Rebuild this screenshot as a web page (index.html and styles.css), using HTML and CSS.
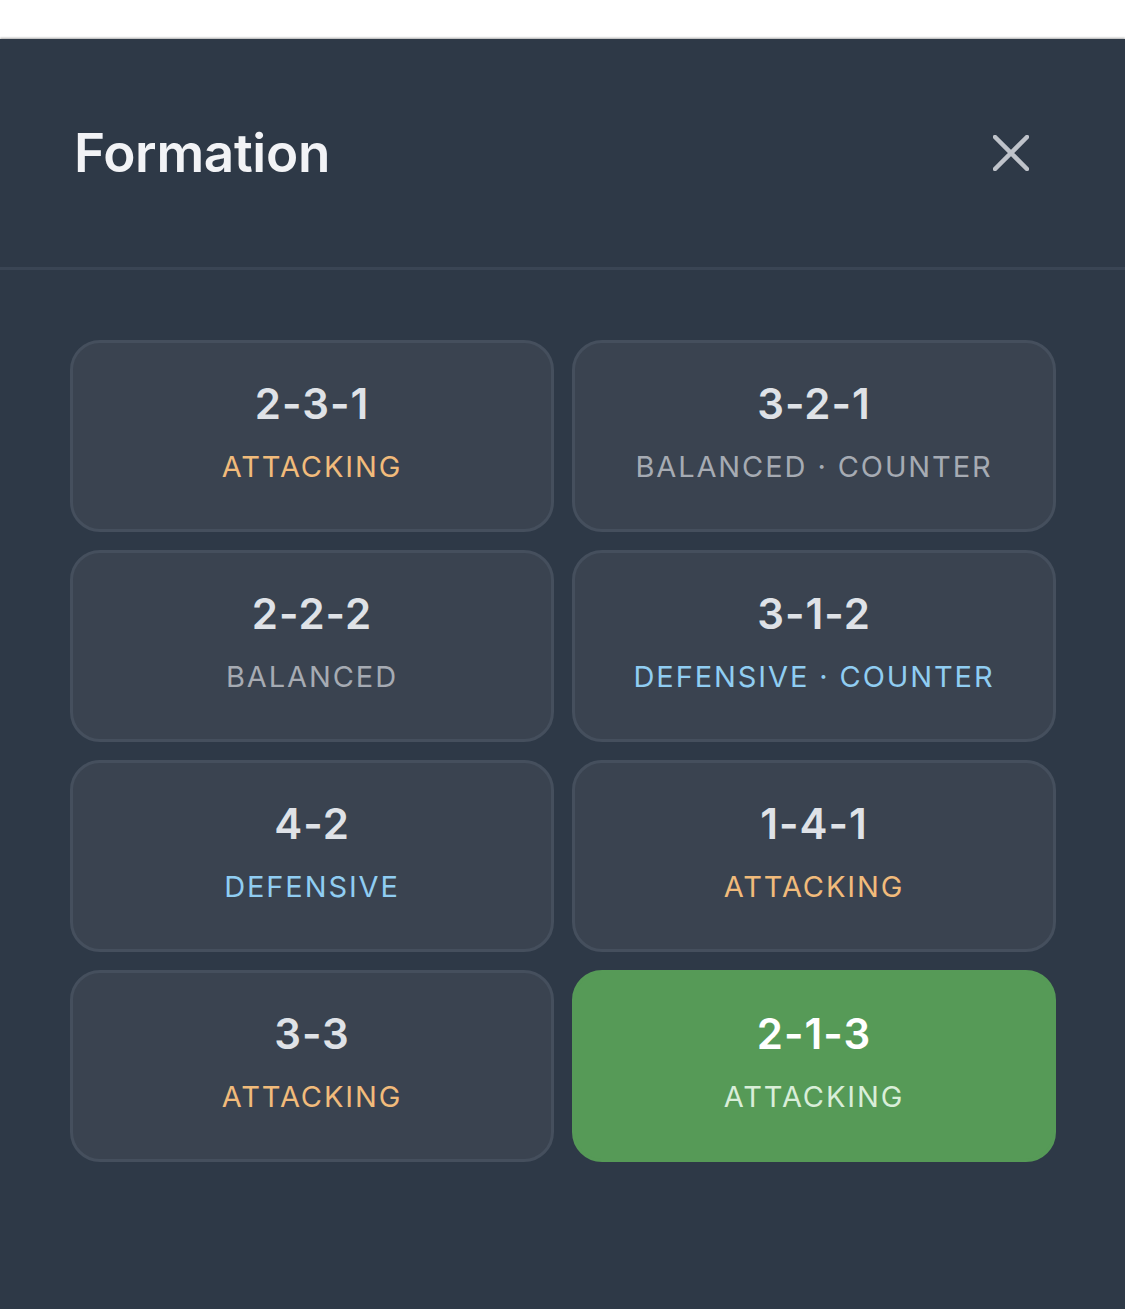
FILE: index.html
```html
<!DOCTYPE html>
<html lang="en">
<head>
  <meta charset="UTF-8" />
  <meta name="viewport" content="width=device-width, initial-scale=1.0"/>
  <title>Formation</title>
  <link rel="stylesheet" href="styles.css">
</head>
<body>

  <div class="sheet">
    <!-- CABECERA -->
    <div class="sheet-header">
      <h1>Formation</h1>
      <button class="close" aria-label="Close">
        <svg viewBox="0 0 36 36" width="36" height="36">
          <path d="M2 2 L34 34 M34 2 L2 34" stroke="currentColor" stroke-width="4.5" stroke-linecap="round" fill="none"/>
        </svg>
      </button>
    </div>

    <!-- LISTA DE FORMACIONES -->
    <div class="formaciones">
      <div class="formacion">
        <span class="numero">2-3-1</span>
        <span class="estilo ataque">ATTACKING</span>
      </div>
      <div class="formacion">
        <span class="numero">3-2-1</span>
        <span class="estilo">BALANCED · COUNTER</span>
      </div>
      <div class="formacion">
        <span class="numero">2-2-2</span>
        <span class="estilo">BALANCED</span>
      </div>
      <div class="formacion">
        <span class="numero">3-1-2</span>
        <span class="estilo defensa">DEFENSIVE · COUNTER</span>
      </div>
      <div class="formacion">
        <span class="numero">4-2</span>
        <span class="estilo defensa">DEFENSIVE</span>
      </div>
      <div class="formacion">
        <span class="numero">1-4-1</span>
        <span class="estilo ataque">ATTACKING</span>
      </div>
      <div class="formacion">
        <span class="numero">3-3</span>
        <span class="estilo ataque">ATTACKING</span>
      </div>
      <div class="formacion activa">
        <span class="numero">2-1-3</span>
        <span class="estilo ataque">ATTACKING</span>
      </div>
    </div>
  </div>

</body>
</html>
```

FILE: styles.css
```css
body {
  margin: 0;
  background-color: #ffffff;
  font-family: Inter, "Noto Sans", sans-serif;
}

.sheet {
  margin-top: 39px;
  min-height: 1270px;
  background-color: #2e3947;
  box-shadow: 0 -1px 2px rgba(0,0,0,0.35);
}

.sheet-header {
  height: 228px;
  display: flex;
  align-items: center;
  justify-content: space-between;
  padding: 0 96px 0 74px;
  border-bottom: 3px solid #3a4554;
}

.sheet-header h1 {
  margin: 0;
  font-size: 53px;
  font-weight: 600;
  color: #f2f3f6;
  letter-spacing: -0.3px;
}

.close {
  background: none;
  border: none;
  padding: 0;
  color: #bfc3ca;
  display: flex;
  cursor: pointer;
}

.formaciones {
  display: grid;
  grid-template-columns: 1fr 1fr;
  gap: 18px;
  padding: 70px 69px 0 70px;
}

.formacion {
  height: 192px;
  box-sizing: border-box;
  padding-bottom: 10px;
  background-color: #3a4350;
  border: 3px solid #454f5d;
  border-radius: 30px;
  display: flex;
  flex-direction: column;
  align-items: center;
  justify-content: center;
  gap: 20px;
  cursor: pointer;
}

.numero {
  font-size: 42px;
  font-weight: 600;
  color: #dfe2e7;
  letter-spacing: 1px;
}

.estilo {
  font-size: 29px;
  font-weight: 400;
  letter-spacing: 1.9px;
  color: #a6abb3;
}

.ataque {
  color: #f1bb7b;
}

.defensa {
  color: #90cdf2;
}

.activa {
  background-color: #569a57;
  border-color: #569a57;
}

.activa .numero {
  color: #ffffff;
}

.activa .estilo {
  color: #d9eed9;
}
```
